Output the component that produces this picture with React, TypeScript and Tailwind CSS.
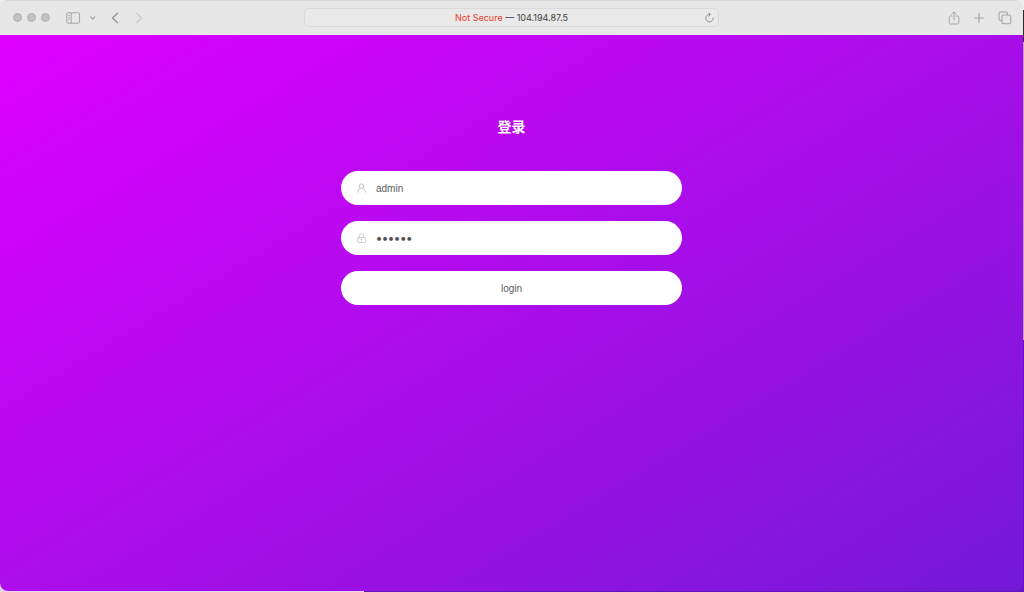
import React, { useState } from 'react';

function Toolbar() {
  return (
    <header className="grid grid-cols-[1fr_2fr_1fr] items-center h-[35px] pb-px bg-[#e7e7e7] border-t border-[#d8d8d8] text-[#a6a6a6]">
      <div className="flex items-center pl-[13px]">
        <div className="flex gap-[5px]">
          <span className="size-[9px] rounded-full bg-[#c2c2c2] border border-[#b2b2b2]" />
          <span className="size-[9px] rounded-full bg-[#c2c2c2] border border-[#b2b2b2]" />
          <span className="size-[9px] rounded-full bg-[#c2c2c2] border border-[#b2b2b2]" />
        </div>
        <button type="button" aria-label="Sidebar" className="ml-4">
          <svg width="15" height="12" viewBox="0 0 15 12" fill="none" stroke="currentColor">
            <rect x="0.8" y="0.8" width="12.8" height="10.4" rx="1.2" />
            <path d="M5.2 1v10M2.3 3.5h1.5M2.3 5.5h1.5M2.3 7.5h1.5" />
          </svg>
        </button>
        <button type="button" aria-label="Tab groups" className="ml-2">
          <svg width="8" height="8" viewBox="0 0 8 8" fill="none" stroke="currentColor" strokeWidth="1.3" strokeLinecap="round">
            <path d="M1.8 3l2 2 2-2" />
          </svg>
        </button>
        <button type="button" aria-label="Back" className="ml-3">
          <svg width="12" height="12" viewBox="0 0 12 12" fill="none" stroke="#949494" strokeWidth="1.3" strokeLinecap="round" strokeLinejoin="round">
            <path d="M8.5 1.2L3.5 6l5 4.8" />
          </svg>
        </button>
        <button type="button" aria-label="Forward" className="ml-3">
          <svg width="12" height="12" viewBox="0 0 12 12" fill="none" stroke="#cacaca" strokeWidth="1.2" strokeLinecap="round" strokeLinejoin="round">
            <path d="M3.5 1.2L8.5 6l-5 4.8" />
          </svg>
        </button>
      </div>

      <div className="flex items-center w-[81%] h-[19px] mx-auto pl-[13px] pr-1 rounded-[5px] bg-[#e9e9e9] border border-[#d9d9d9]">
        <p className="flex-1 text-center font-['Inter',sans-serif] text-[9px] leading-4 text-[#404040]">
          <span className="text-[#f0392c]">Not Secure</span> — 104.194.87.5
        </p>
        <button type="button" aria-label="Reload">
          <svg width="9" height="11" viewBox="0 0 9 11" fill="none" stroke="#909090" strokeLinecap="round" strokeLinejoin="round">
            <path d="M5 2.5a3.7 3.7 0 1 0 3.2 3.6M3.7 0.8l1.8 1.7-1.8 1.7" />
          </svg>
        </button>
      </div>

      <div className="flex items-center justify-end gap-3 pr-[11px]">
        <button type="button" aria-label="Share">
          <svg width="12" height="14" viewBox="0 0 12 14" fill="none" stroke="currentColor" strokeLinecap="round" strokeLinejoin="round">
            <path d="M4 5H2.5A1.3 1.3 0 0 0 1.2 6.3v5.4A1.3 1.3 0 0 0 2.5 13h7a1.3 1.3 0 0 0 1.3-1.3V6.3A1.3 1.3 0 0 0 9.5 5H8M6 9V1M3.8 3L6 .9 8.2 3" />
          </svg>
        </button>
        <button type="button" aria-label="New tab">
          <svg width="14" height="14" viewBox="0 0 14 14" fill="none" stroke="currentColor" strokeWidth="1.2" strokeLinecap="round">
            <path d="M7 2.5v9M2.5 7h9" />
          </svg>
        </button>
        <button type="button" aria-label="Tab overview">
          <svg width="14" height="14" viewBox="0 0 14 14" fill="none" stroke="currentColor" strokeWidth="1.1">
            <path d="M4 9.5H2.7A1.7 1.7 0 0 1 1 7.8V2.7A1.7 1.7 0 0 1 2.7 1h5.1A1.7 1.7 0 0 1 9.5 2.7V4" />
            <rect x="4" y="4" width="8.8" height="8.8" rx="1.7" />
          </svg>
        </button>
      </div>
    </header>
  );
}

export default function App() {
  const [username, setUsername] = useState('admin');
  const [password, setPassword] = useState('123456');

  return (
    <div className="relative min-h-screen flex flex-col bg-[#6514c4] pr-px pb-px">
      {/* slivers of the desktop behind the window */}
      <div className="absolute left-0 bottom-0 w-[364px] h-2 bg-[#ead5f5]" />
      <div className="absolute right-0 top-0 w-2 h-[10px] bg-[#eeeeee]" />
      <div className="absolute left-0 top-0 size-2 bg-[#eeeeee]" />
      <div className="absolute right-0 top-[10px] w-px h-8 bg-[#2c2c2c]" />
      <div className="absolute right-0 top-[42px] w-px h-[298px] bg-[#c59aea]" />

      <div className="relative flex-1 flex flex-col rounded-lg overflow-hidden">
        <Toolbar />
        <main className="flex-1 bg-[linear-gradient(149deg,#de00ff_0%,#aa0dea_50%,#7319d6_100%)] pt-[82px] font-['Liberation_Sans','Noto_Sans_CJK_SC',sans-serif]">
          <form className="w-1/3 mx-auto flex flex-col gap-4" onSubmit={(e) => e.preventDefault()}>
            <h1 className="mb-[18px] text-center text-[14px] leading-5 font-bold text-white">登录</h1>

            <div className="flex items-center h-[34px] px-4 rounded-full bg-white">
              <label htmlFor="username" aria-label="Username">
                <svg width="9" height="10" viewBox="0 0 9 10" fill="none" stroke="#bdbdbd" strokeWidth="0.9" strokeLinecap="round">
                  <circle cx="4.5" cy="3.3" r="2.4" />
                  <path d="M.6 9.2C.7 7.4 1.8 6 3.2 5.5M8.4 9.2C8.3 7.4 7.2 6 5.8 5.5" />
                </svg>
              </label>
              <input
                id="username"
                type="text"
                value={username}
                onChange={(e) => setUsername(e.target.value)}
                className="flex-1 min-w-0 ml-[10px] pt-0.5 text-[10px] leading-4 text-[#5c5c5c] outline-none"
              />
            </div>

            <div className="flex items-center h-[34px] px-4 rounded-full bg-white">
              <label htmlFor="password" aria-label="Password">
                <svg width="9" height="10" viewBox="0 0 9 10" fill="none" stroke="#c0c0c0" strokeWidth="0.8">
                  <rect x=".6" y="4.5" width="7.8" height="4.9" rx=".5" />
                  <path d="M2.2 4.5V2.9a2.3 2.3 0 0 1 4.6 0v1.6M4.5 6.2v1.7M3.7 6.4h1.6" />
                </svg>
              </label>
              <input
                id="password"
                type="password"
                value={password}
                onChange={(e) => setPassword(e.target.value)}
                className="flex-1 min-w-0 ml-[10px] font-['Inter',sans-serif] text-[12px] font-semibold leading-4 text-[#505050] outline-none"
              />
            </div>

            <button type="submit" className="h-[34px] pt-0.5 rounded-full bg-white text-[10px] leading-4 text-[#5c5c5c]">
              login
            </button>
          </form>
        </main>
      </div>
    </div>
  );
}
